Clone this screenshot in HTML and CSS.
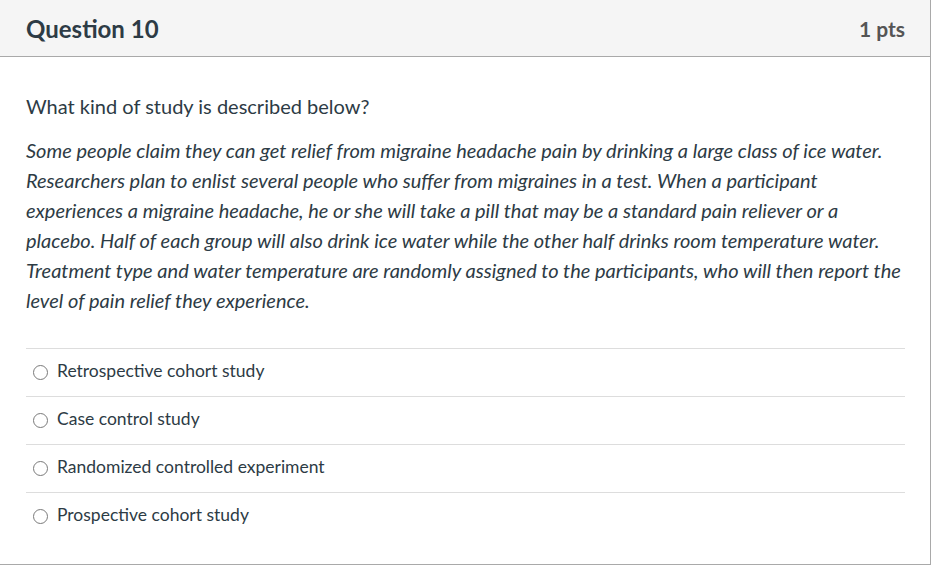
FILE: index.html
```html
<!DOCTYPE html>
<html lang="en">
<head>
<meta charset="utf-8">
<title>Question 10</title>
<link rel="stylesheet" href="styles.css">
</head>
<body>
<div class="card">
  <div class="header">
    <span class="title">Question 10</span>
    <span class="pts">1 pts</span>
  </div>
  <div class="content">
    <p class="question">What kind of study is described below?</p>
    <p class="scenario">Some people claim they can get relief from migraine headache pain by drinking a large class of ice water. Researchers plan to enlist several people who suffer from migraines in a test. When a participant experiences a migraine headache, he or she will take a pill that may be a standard pain reliever or a placebo. Half of each group will also drink ice water while the other half drinks room temperature water. Treatment type and water temperature are randomly assigned to the participants, who will then report the level of pain relief they experience.</p>
    <div class="answers">
      <label class="answer"><span class="radio"></span><span class="atext">Retrospective cohort study</span></label>
      <label class="answer"><span class="radio"></span><span class="atext">Case control study</span></label>
      <label class="answer"><span class="radio"></span><span class="atext">Randomized controlled experiment</span></label>
      <label class="answer"><span class="radio"></span><span class="atext">Prospective cohort study</span></label>
    </div>
  </div>
</div>
</body>
</html>
```
FILE: styles.css
```css
html, body {
  margin: 0;
  padding: 0;
  background: #ffffff;
}
body {
  font-family: Lato, "Noto Sans", sans-serif;
  color: #2d3b45;
}
.card {
  box-sizing: border-box;
  width: 931px;
  height: 565px;
  border-right: 1px solid #a9a9a9;
  border-bottom: 1px solid #a9a9a9;
}
.header {
  box-sizing: border-box;
  height: 57px;
  background: #f5f5f5;
  border-bottom: 1px solid #a9a9a9;
  display: flex;
  justify-content: space-between;
  align-items: center;
  padding: 0 25px 0 26px;
}
.title {
  font-size: 24px;
  font-weight: 700;
  color: #2d3b45;
}
.pts {
  font-size: 21px;
  font-weight: 700;
  color: #555555;
}
.content {
  padding: 34px 25px 0 26px;
}
.question {
  margin: 0;
  font-size: 20px;
  line-height: 30px;
}
.scenario {
  margin: 14px 0 0 0;
  font-size: 20px;
  line-height: 30px;
  font-style: italic;
}
.answers {
  margin-top: 33px;
  display: flex;
  flex-direction: column;
}
.answer {
  box-sizing: content-box;
  height: 43px;
  padding-bottom: 4px;
  border-top: 1px solid #dddddd;
  display: flex;
  align-items: center;
  gap: 9px;
  font-size: 17.5px;
}
.radio {
  box-sizing: border-box;
  width: 15px;
  height: 15px;
  border: 1px solid #7a7a7a;
  border-radius: 50%;
  margin-left: 7px;
  margin-top: 4px;
  background: #fff;
}
```
